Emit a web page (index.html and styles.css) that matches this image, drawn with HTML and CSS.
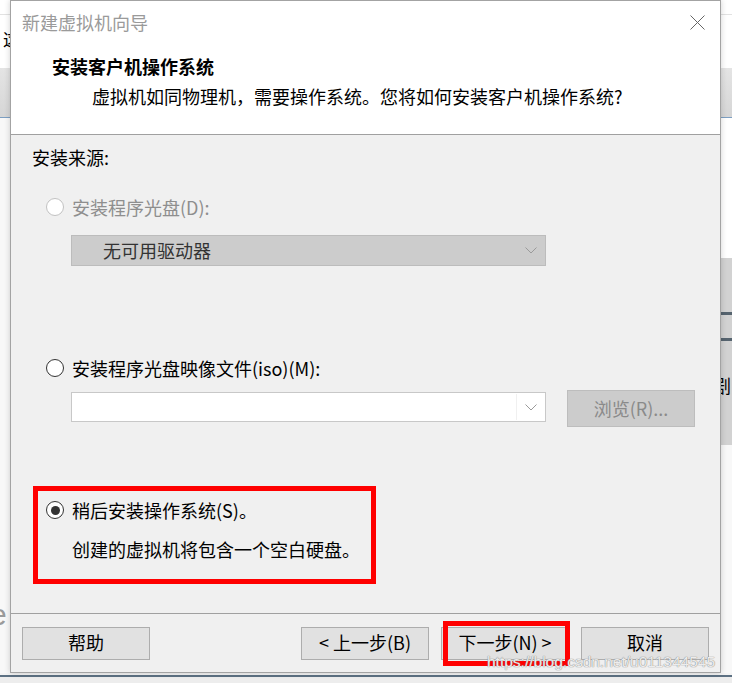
FILE: index.html
```html
<!DOCTYPE html>
<html lang="zh-CN">
<head>
<meta charset="utf-8">
<title>新建虚拟机向导</title>
<link rel="stylesheet" href="styles.css">
</head>
<body>
<div class="desktop">
  <div class="bg-col bg-left">
    <div class="bg-top"></div>
    <div class="bg-white"><span class="bg-char">这</span></div>
    <div class="bg-band"></div>
    <div class="bg-rest"><span class="bg-e">e</span></div>
  </div>
  <div class="bg-gap"></div>
  <div class="bg-col bg-right">
    <div class="bg-top"></div>
    <div class="bg-white"></div>
    <div class="bg-band"></div>
    <div class="bg-white2"></div>
    <div class="bg-gray">
      <div class="bg-dark a"></div>
      <div class="bg-dark b"></div>
      <span class="bg-char2">剧</span>
    </div>
    <div class="bg-rest"></div>
  </div>
</div>
<div class="taskline"></div>

<div class="dialog">
  <div class="titlebar">
    <span class="title">新建虚拟机向导</span>
    <svg class="close" width="15" height="15" viewBox="0 0 15 15"><path d="M0.5 0.5 L14.5 14.5 M14.5 0.5 L0.5 14.5" stroke="#666" stroke-width="1" fill="none"/></svg>
  </div>
  <div class="header">
    <div class="h-title">安装客户机操作系统</div>
    <div class="h-sub">虚拟机如同物理机，需要操作系统。您将如何安装客户机操作系统?</div>
  </div>
  <div class="content">
    <div class="source-label">安装来源:</div>

    <div class="opt opt-disabled">
      <span class="radio disabled"></span>
      <span class="opt-label">安装程序光盘(D):</span>
    </div>
    <div class="combo combo-disabled">
      <span class="combo-text">无可用驱动器</span>
      <svg class="chev" width="12" height="7" viewBox="0 0 12 7"><path d="M0.5 0.5 L6 6 L11.5 0.5" stroke="#9a9a9a" fill="none"/></svg>
    </div>

    <div class="opt opt2">
      <span class="radio"></span>
      <span class="opt-label">安装程序光盘映像文件(iso)(M):</span>
    </div>
    <div class="file-row">
      <div class="combo combo-file">
        <span class="combo-edit"></span>
        <svg class="chev" width="12" height="7" viewBox="0 0 12 7"><path d="M0.5 0.5 L6 6 L11.5 0.5" stroke="#9a9a9a" fill="none"/></svg>
      </div>
      <div class="browse">浏览(R)...</div>
    </div>

    <div class="group">
      <div class="opt opt3">
        <span class="radio checked"></span>
        <span class="opt-label">稍后安装操作系统(S)。</span>
      </div>
      <div class="desc">创建的虚拟机将包含一个空白硬盘。</div>
    </div>
  </div>
  <div class="footer">
    <div class="btn">帮助</div>
    <div class="btn-group">
      <div class="btn">&lt; 上一步(B)</div>
      <div class="btn btn-next">下一步(N) &gt;</div>
      <div class="btn">取消</div>
    </div>
  </div>
</div>

<div class="watermark">https://blog.csdn.net/u011344545</div>
</body>
</html>
```

FILE: styles.css
```css
*,
*::before,
*::after {
  box-sizing: border-box;
  margin: 0;
  padding: 0;
}

body {
  width: 732px;
  height: 683px;
  overflow: hidden;
  position: relative;
  background: #ececec;
  font-family: "Noto Sans CJK SC", "Noto Sans", sans-serif;
  font-size: 18px;
  color: #000;
}

/* background application window */
.desktop {
  display: flex;
  height: 673px;
}

.bg-col {
  display: flex;
  flex-direction: column;
  overflow: hidden;
}

.bg-left {
  width: 10px;
}

.bg-gap {
  width: 711px;
  background: #fafafa;
}

.bg-right {
  width: 11px;
}

.bg-top {
  height: 15px;
  background: #fff;
  border-bottom: 1px solid #e2e2e2;
}

.bg-white {
  height: 53px;
  background: #fff;
  position: relative;
}

.bg-char {
  display: block;
  padding: 15px 0 0 3px;
  line-height: 18px;
  font-size: 17px;
  white-space: nowrap;
}

.bg-band {
  height: 50px;
  background: linear-gradient(#e4e4e4, #d6d6d6);
  border-bottom: 1px solid #7d9fc2;
}

.bg-rest {
  flex: 1;
  background: #f8f8f8;
}

.bg-e {
  display: block;
  margin-top: 482px;
  margin-left: -10px;
  font-size: 30px;
  line-height: 30px;
  color: #9a9a9a;
  font-family: "Liberation Sans", sans-serif;
}

.bg-white2 {
  height: 140px;
  background: #fff;
}

.bg-gray {
  height: 187px;
  background: #d2d2d2;
  display: flex;
  flex-direction: column;
}

.bg-dark {
  height: 3px;
  background: #56646f;
}

.bg-dark.a {
  margin-top: 54px;
}

.bg-dark.b {
  margin-top: 23px;
}

.bg-char2 {
  display: block;
  margin-top: 34px;
  margin-left: -8px;
  font-size: 18px;
  line-height: 20px;
  white-space: nowrap;
}

.taskline {
  height: 10px;
  background: #ededed;
  border-top: 2px solid #f4f4f4;
  box-shadow: inset 0 2px 0 #5d7183;
}

/* dialog */
.dialog {
  position: absolute;
  left: 10px;
  top: 0;
  width: 711px;
  height: 673px;
  border: 1px solid #a3a3a3;
  background: #f0f0f0;
  display: flex;
  flex-direction: column;
  box-shadow: 0 0 6px rgba(0, 0, 0, 0.18);
}

.titlebar {
  height: 44px;
  background: #fff;
  display: flex;
  align-items: center;
  justify-content: space-between;
  padding: 0 15px 3px 11px;
}

.title {
  color: #9a9a9a;
  line-height: 26px;
}

.close {
  display: block;
  margin-top: 1px;
}

.header {
  height: 90px;
  background: #fff;
  border-bottom: 1px solid #a0a0a0;
  padding-top: 8px;
}

.h-title {
  padding-left: 41px;
  font-weight: bold;
  line-height: 26px;
}

.h-sub {
  padding-left: 81px;
  margin-top: 4px;
  line-height: 26px;
}

.content {
  height: 479px;
  border-bottom: 1px solid #a0a0a0;
  padding: 9px 0 0 21px;
  display: flex;
  flex-direction: column;
  align-items: flex-start;
}

.source-label {
  line-height: 26px;
}

.opt {
  display: flex;
  align-items: center;
  margin-top: 24px;
  margin-left: 14px;
  line-height: 26px;
}

.opt-label {
  margin-left: 8px;
}

.opt-disabled .opt-label {
  color: #8e8e8e;
}

.radio {
  width: 18px;
  height: 18px;
  border-radius: 50%;
  border: 1px solid #333;
  background: #fff;
  display: flex;
  align-items: center;
  justify-content: center;
}

.radio.disabled {
  border-color: #c2c2c2;
}

.radio.checked::after {
  content: "";
  width: 9px;
  height: 9px;
  border-radius: 50%;
  background: #333;
}

.combo {
  width: 475px;
  display: flex;
  align-items: center;
  justify-content: space-between;
}

.combo-disabled {
  height: 31px;
  margin-top: 15px;
  margin-left: 39px;
  background: #cccccc;
  border: 1px solid #bcbcbc;
  padding: 0 8px 2px 31px;
}

.combo-text {
  color: #333;
  line-height: 26px;
}

.chev {
  display: block;
}

.combo-disabled .chev {
  margin-top: 2px;
}

.opt2 {
  margin-top: 89px;
}

.file-row {
  display: flex;
  align-items: flex-start;
  margin-top: 9px;
  margin-left: 39px;
}

.combo-file {
  height: 30px;
  margin-top: 2px;
  background: #fff;
  border: 1px solid #c8c8c8;
  padding: 1px 8px 1px 1px;
}

.combo-edit {
  flex: 0 0 444px;
  height: 26px;
  background: #fff;
  border-right: 1px solid #f0f0f0;
}

.browse {
  width: 128px;
  height: 37px;
  margin-left: 21px;
  background: #cccccc;
  border: 1px solid #bdbdbd;
  color: #8a8a8a;
  display: flex;
  align-items: center;
  justify-content: center;
  padding-bottom: 2px;
}

.group {
  margin-top: 59px;
  margin-left: 1px;
  width: 343px;
  height: 98px;
  border: 5px solid #ff0000;
  padding: 6px 0 0 8px;
}

.opt3 {
  margin: 0;
}

.desc {
  margin-top: 13px;
  padding-left: 26px;
  line-height: 26px;
}

.footer {
  height: 58px;
  padding: 13px 11px 0 11px;
  display: flex;
  align-items: flex-start;
  justify-content: space-between;
}

.btn-group {
  display: flex;
  gap: 12px;
}

.btn {
  position: relative;
  width: 128px;
  height: 33px;
  background: #e1e1e1;
  border: 1px solid #adadad;
  display: flex;
  align-items: center;
  justify-content: center;
  line-height: 26px;
  padding-bottom: 3px;
}

.btn-next::after {
  content: "";
  position: absolute;
  left: 1px;
  top: -7px;
  width: 127px;
  height: 45px;
  border: 5px solid #ff0000;
}

.watermark {
  position: absolute;
  left: 487px;
  top: 652px;
  font-family: "Liberation Sans", sans-serif;
  font-size: 15.5px;
  line-height: 20px;
  color: rgba(255, 255, 255, 0.85);
  text-shadow: 0 0 1px #8a8a8a, 0 0 1px #8a8a8a;
  white-space: nowrap;
}
```
